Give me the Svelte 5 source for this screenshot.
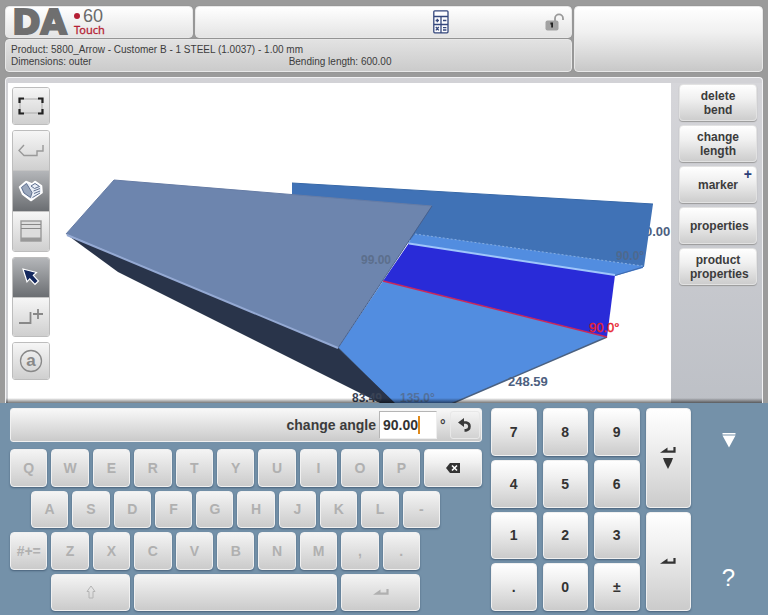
<script>
  const rowOne = ['Q', 'W', 'E', 'R', 'T', 'Y', 'U', 'I', 'O', 'P'];
  const rowTwo = ['A', 'S', 'D', 'F', 'G', 'H', 'J', 'K', 'L', '-'];
  const rowThree = ['#+=', 'Z', 'X', 'C', 'V', 'B', 'N', 'M', ',', '.'];
  const digits = [
    ['7', '8', '9'],
    ['4', '5', '6'],
    ['1', '2', '3'],
    ['.', '0', '±']
  ];
  const actions = ['delete bend', 'change length', 'marker', 'properties', 'product properties'];
  let angle = $state('90.00');
</script>

{#snippet enter()}
  <svg class="enter" width="16" height="6" viewBox="0 0 16 6" aria-hidden="true">
    <path d="M0 5.8 7.500 0.4V3.600H13.4V0H15.6V5.8Z" fill="currentColor" />
  </svg>
{/snippet}

<div class="app">
  <header>
    <div class="panel logo">
      <span class="da">DA</span>
      <span class="model">
        <span class="num"><i></i>60</span>
        <span class="touch">Touch</span>
      </span>
    </div>
    <div class="panel status">
      <button class="bare calc" aria-label="Calculator">
        <svg width="16" height="24" viewBox="0 0 16 24">
          <g fill="none" stroke="#34477c" stroke-width="1.3">
            <rect x="0.8" y="0.8" width="14.2" height="22" rx="1" fill="#fdfdff" />
            <path d="M1 6.5H15M1 14.5H15M8 6.5V23" />
            <path d="M2.6 10.5H6M4.3 8.8V12.2M10 10.5H13.4M2.8 17 5.8 20.4M5.8 17 2.8 20.4M10 17.6H13.4M10 20H13.4" />
          </g>
        </svg>
      </button>
      <button class="bare lock" aria-label="Unlock">
        <svg width="20" height="18" viewBox="0 0 20 18">
          <path d="M10 8V5.4A4 4 0 0 1 18 5.4V7" fill="none" stroke="#9a9a9a" stroke-width="1.8" />
          <rect x="0.5" y="7.5" width="13" height="10" rx="2" fill="#a2a2a2" />
          <path d="M5.4 9.6H8V14.6H6.2V11.4H5.4Z" fill="#222" />
        </svg>
      </button>
    </div>
    <div class="panel info">
      <p>Product: 5800_Arrow - Customer B - 1 STEEL (1.0037) - 1.00 mm</p>
      <p class="split"><span>Dimensions: outer</span><span>Bending length: 600.00</span></p>
    </div>
    <div class="panel extra"></div>
  </header>

  <main>
    <nav class="tools" aria-label="View tools">
      <div class="group">
        <button aria-label="Fit view">
          <svg width="26" height="20" viewBox="0 0 26 20" fill="none">
            <rect x="2" y="3" width="22" height="14" stroke="#aaa" />
            <path d="M1.5 7V2.5H6M20 2.5H24.500V7M24.500 13V17.500H20M6 17.500H1.500V13" stroke="#222" stroke-width="2.2" />
          </svg>
        </button>
      </div>
      <div class="group three">
        <button aria-label="Profile view">
          <svg width="26" height="18" viewBox="0 0 26 18" fill="none" stroke="#999" stroke-width="1.4">
            <path d="M6 3 1 8.500 6 13.500H19V9H25V3" />
          </svg>
        </button>
        <button class="on" aria-label="3D view">
          <svg width="26" height="22" viewBox="0 0 26 22" stroke-linejoin="round">
            <path d="M1.500 7 8 1.500 14 4 17 1.500 23.500 6 24 12.500 13 20.500 4.500 14Z" fill="#e9eef6" stroke="#fff" stroke-width="1.600" />
            <path d="M3.500 7.500 8.500 3.500 14 12.500 12.500 17.500 6 13Z" fill="#9aa7bc" stroke="#5f7090" />
            <path d="M13 6 17 3.500 21.500 6.500 16.500 8.500ZM15.500 11 22 8.500M16 13.500 22 11M14.500 17.500 22 13" fill="none" stroke="#5f7090" />
          </svg>
        </button>
        <button aria-label="List view">
          <svg width="22" height="22" viewBox="0 0 22 22">
            <rect x="1" y="1" width="20" height="20" fill="#ddd" stroke="#999" stroke-width="1.400" />
            <path d="M1 4.500H21M1 8.500H21" stroke="#888" />
            <path d="M1 17.500H21V21H1Z" fill="#999" />
          </svg>
        </button>
      </div>
      <div class="group two">
        <button class="on" aria-label="Select">
          <svg width="18" height="18" viewBox="0 0 18 18">
            <path d="M1 1 14.500 4.500 11.300 7.400 16.500 13 13 16.300 7.700 10.800 5 13.800Z" fill="#14285e" stroke="#fff" stroke-width="1.200" />
          </svg>
        </button>
        <button aria-label="Add bend">
          <svg width="26" height="20" viewBox="0 0 26 20" fill="none" stroke="#888" stroke-width="1.800">
            <path d="M1 16H12.500V5M15 7H25M20 2V12" />
          </svg>
        </button>
      </div>
      <div class="group">
        <button aria-label="Annotations">
          <svg width="24" height="24" viewBox="0 0 24 24">
            <circle cx="12" cy="12" r="10.500" fill="none" stroke="#888" stroke-width="1.300" />
            <text x="12" y="16.500" text-anchor="middle" font-size="17" font-weight="bold" fill="#888">a</text>
          </svg>
        </button>
      </div>
    </nav>

    <svg class="scene" viewBox="50 83 621 320" preserveAspectRatio="xMidYMid slice" role="img" aria-label="Sheet metal part in 3D">
      <text class="dim" x="645" y="236">0.00</text>
      <path d="M292 183 653 204 644 267 410 240 380 210 292 196Z" fill="#4072b6" />
      <path d="M292 183 653 204" stroke="#3768a8" />
      <path d="M408 243 415 234 643 266 643 268 615 276Z" fill="#528de0" />
      <path d="M415 234 643 266" stroke="#86aee2" stroke-dasharray="2 2" />
      <text class="dim ghost" x="616" y="260">90.0°</text>
      <path d="M409 243 615 275 607 337 383 281Z" fill="#292bd8" />
      <path d="M409 243.500 615 275" stroke="#9fc6fb" stroke-width="2" />
      <path d="M615 275.500 643 267" stroke="#3f69ab" />
      <path d="M338 348 383 281 607 337 451 404H394Z" fill="#528de0" />
      <path d="M607 337 451 404M338 348 394 404" stroke="#4b6180" stroke-width="1.500" />
      <path d="M383 281 607 337" stroke="#c8285a" stroke-width="1.400" />
      <path d="M66 234 118 272 382 404H396L338 348Z" fill="#29344a" />
      <path d="M66 234 114 180 432 206 338 348Z" fill="#6d85ae" />
      <path d="M66 234 114 180 432 206" fill="none" stroke="#667ca5" />
      <path d="M432 206 338 348" stroke="#465f8c" />
      <path d="M67 235 338 348" stroke="#94a9d3" stroke-width="2" />
      <text class="dim ghost" x="361" y="264">99.00</text>
      <text class="dim" x="508" y="386">248.59</text>
      <text class="dim dark" x="352" y="402">83.49</text>
      <text class="dim ghost" x="400" y="402">135.0°</text>
      <text class="dim red" x="589" y="332">90.0°</text>
    </svg>

    <aside>
      {#each actions as action}
        <button class:plus={action === 'marker'}>{action}</button>
      {/each}
    </aside>
  </main>

  <section class="keyboard">
    <div class="letters">
      <div class="entry">
        <label for="angle">change angle</label>
        <span class="field"><input id="angle" bind:value={angle} /><i class="caret"></i></span>
        <span class="unit">°</span>
        <button aria-label="Undo">
          <svg width="14" height="14" viewBox="0 0 14 14">
            <path d="M4 4.500H8.200A4 4 0 0 1 8 12.400H6.500" fill="none" stroke="#3a3a3a" stroke-width="2.600" />
            <path d="M0 4.500 6 0V9Z" fill="#3a3a3a" />
          </svg>
        </button>
      </div>
      <div class="row r1">
        {#each rowOne as k}<button class="key">{k}</button>{/each}
        <button class="key strong" aria-label="Backspace">
          <svg width="14" height="10" viewBox="0 0 14 10">
            <path d="M0 5 4 0H14V10H4Z" fill="#333" />
            <path d="M6 2.500 11 7.500M11 2.500 6 7.500" stroke="#fff" stroke-width="1.600" />
          </svg>
        </button>
      </div>
      <div class="row r2">
        {#each rowTwo as k}<button class="key">{k}</button>{/each}
      </div>
      <div class="row r3">
        {#each rowThree as k}<button class="key">{k}</button>{/each}
      </div>
      <div class="row r4">
        <button class="key" aria-label="Shift">
          <svg width="10" height="14" viewBox="0 0 10 14">
            <path d="M5 1 9 6.500H7V13H3V6.500H1Z" fill="none" stroke="#b4b4b4" />
          </svg>
        </button>
        <button class="key" aria-label="Space"></button>
        <button class="key" aria-label="Enter">{@render enter()}</button>
      </div>
    </div>

    <div class="numpad">
      {#each digits as line, r}
        {#each line as d}<button class="key strong">{d}</button>{/each}
        {#if r === 0}
          <button class="key strong tall" aria-label="Enter and next">
            {@render enter()}
            <svg width="10" height="11" viewBox="0 0 10 11"><path d="M0 0H10L8.500 4 5 11 1.500 4Z" fill="#333" /></svg>
          </button>
        {:else if r === 2}
          <button class="key strong tall" aria-label="Confirm">{@render enter()}</button>
        {/if}
      {/each}
    </div>

    <div class="side">
      <button class="bare" aria-label="Hide keyboard">
        <svg width="14" height="16" viewBox="0 0 14 16" fill="#fff">
          <path d="M0.500 1H13.500V2.600H0.500ZM0.500 3.400H13.500L7 15.500Z" />
        </svg>
      </button>
      <button class="bare help">?</button>
    </div>
  </section>
</div>

<style>
  :global(body) { margin: 0; }
  .app, .app * { box-sizing: border-box; }
  .app {
    display: flex;
    flex-direction: column;
    min-height: 100vh;
    background: #9b9b9b;
    font-family: "Liberation Sans", Arial, sans-serif;
    color: #3c3c3c;
  }
  button { font: inherit; color: inherit; padding: 0; margin: 0; cursor: pointer; }
  .bare { background: none; border: 0; display: flex; align-items: center; justify-content: center; }

  header {
    display: grid;
    grid-template-columns: 188fr 378fr 189fr;
    grid-template-rows: 32px 33px;
    gap: 1px 2px;
    padding: 6px 5px 0;
  }
  .panel {
    border: 1px solid #e8e8e8;
    border-radius: 4px;
    background: linear-gradient(#fff, #e4e4e4);
    box-shadow: 0 0 1px #777;
  }
  .info { grid-column: 1 / 3; grid-row: 2; background: linear-gradient(#e2e2e2, #cbcbcb); padding: 4px 5px 0; }
  .info p { margin: 0; font-size: 10px; line-height: 12px; }
  .split { display: flex; }
  .split span { flex: 0 0 50%; }
  .extra { grid-column: 3; grid-row: 1 / 3; background: linear-gradient(#fff, #f0f0f0 40%, #c8c8c8); }
  .logo { display: flex; align-items: center; padding-left: 2px; gap: 3px; }
  .da {
    font: bold 34px/30px "DejaVu Sans", sans-serif;
    color: #6f6f6f;
    -webkit-text-stroke: 2px #6f6f6f;
    width: 63px;
    text-align: center;
  }
  .model { display: flex; flex-direction: column; }
  .num { display: flex; align-items: center; gap: 3px; font-size: 18px; line-height: 14px; color: #6a6a6a; }
  .num i { width: 6px; height: 6px; border-radius: 50%; background: #b51f35; }
  .touch { font: 11px/13px "Noto Sans", sans-serif; color: #b51f35; -webkit-text-stroke: 0.3px #b51f35; }
  .status { display: grid; grid-template-columns: 1fr auto; align-items: center; padding-right: 6px; }
  .calc { justify-self: center; padding-left: 141px; }

  main {
    flex: 1;
    min-height: 320px;
    display: flex;
    margin: 5px 5px 0;
    border: 1px solid #f2f2f4;
    border-bottom: 0;
    border-radius: 4px 4px 0 0;
    background: linear-gradient(#d2d2d6, #cdced2);
    padding: 5px 0 0 2px;
    position: relative;
  }
  main::after {
    content: "";
    position: absolute;
    inset: auto 0 0 0;
    height: 5px;
    background: linear-gradient(#0000, #0008);
  }
  .tools { width: 42px; background: #fff; padding: 4px 0 0 4px; display: flex; flex-direction: column; gap: 5px; }
  .group {
    width: 38px;
    border: 1px solid #bdbdbd;
    border-radius: 3px;
    overflow: hidden;
    display: flex;
    flex-direction: column;
    height: 38px;
    flex-shrink: 0;
  }
  .three { height: 122px; }
  .two { height: 80px; }
  .group button {
    flex: 1;
    border: 0;
    background: linear-gradient(#f6f6f6, #cfcfcf);
    display: flex;
    align-items: center;
    justify-content: center;
  }
  .group button + button { border-top: 1px solid #c4c4c4; }
  .group button.on { background: linear-gradient(#b4b6b9, #6b6e72); }
  .scene { flex: 1; min-width: 0; width: 0; display: block; background: #fff; }
  .dim { font-size: 13px; font-weight: bold; fill: #4d5f80; }
  .ghost { font-size: 12px; fill: #55667f; opacity: 0.7; }
  .dark { font-size: 12px; fill: #3a4355; }
  .red { fill: #e8232f; font-weight: normal; stroke: #e8232f; stroke-width: 0.4px; }
  aside {
    width: 91px;
    flex-shrink: 0;
    padding: 1px 5px 0 8px;
    display: flex;
    flex-direction: column;
    gap: 4px;
    background: linear-gradient(#d6d6da, #bdc0c6);
  }
  aside button {
    height: 37px;
    border: 1px solid #e2e2e2;
    border-radius: 4px;
    background: linear-gradient(#fff, #f0f0f0 40%, #cdcdcd);
    box-shadow: 0 1px 1px #9a9a9a;
    font-size: 12px;
    font-weight: bold;
    line-height: 14px;
    padding: 0 10px;
    position: relative;
  }
  .plus::after {
    content: "+";
    position: absolute;
    top: 0;
    right: 4px;
    color: #2c3f78;
    font-size: 14px;
  }

  .keyboard {
    display: flex;
    height: 212px;
    flex-shrink: 0;
    background: #7491a9;
    padding: 5px 2px 4px 10px;
  }
  .letters { flex: 472; display: flex; flex-direction: column; gap: 4px; margin-right: 9px; }
  .entry {
    height: 34px;
    margin-bottom: 3px;
    display: flex;
    align-items: center;
    justify-content: flex-end;
    border: 1px solid #f0f0f0;
    border-radius: 3px;
    background: linear-gradient(#f8f8f8, #cacaca);
    font-size: 14px;
    font-weight: bold;
    padding-right: 1px;
  }
  .field { position: relative; width: 58px; height: 28px; margin: 0 3px; }
  .field input {
    width: 100%;
    height: 100%;
    border: 1px solid #b5b5b5;
    border-right-color: #eee;
    border-bottom-color: #eee;
    padding: 0 3px;
    background: #fff;
    font: inherit;
    color: #333;
    outline: 0;
  }
  .caret { position: absolute; left: 39px; top: 5px; width: 2px; height: 18px; background: #e08a1a; }
  .unit { width: 10px; }
  .entry button {
    width: 30px;
    height: 28px;
    border: 1px solid #e8e8e8;
    border-radius: 3px;
    background: linear-gradient(#f4f4f4, #d2d2d2);
    display: flex;
    align-items: center;
    justify-content: center;
  }
  .row { flex: 1; display: grid; gap: 4px; }
  .r1 { grid-template-columns: repeat(10, 1fr) 58px; }
  .r2 { grid-template-columns: repeat(10, 1fr); padding: 0 42px 0 21px; }
  .r3 { grid-template-columns: repeat(10, 1fr); padding-right: 62px; }
  .r4 { grid-template-columns: 79fr 203fr 79fr; padding: 0 62px 0 41px; }
  .key {
    display: flex;
    flex-direction: column;
    gap: 5px;
    align-items: center;
    justify-content: center;
    border: 1px solid #f0f0f0;
    border-radius: 4px;
    background: linear-gradient(#f4f4f4, #cbcbcb);
    box-shadow: 0 1px 2px #48617a;
    font-size: 14px;
    font-weight: bold;
    color: #b0b0b0;
    min-width: 0;
  }
  .key.strong { color: #333; background: linear-gradient(#fff, #f0f0f0 35%, #cbcbcb); }
  .numpad {
    flex: 200;
    display: grid;
    grid-template-columns: repeat(4, 1fr);
    grid-template-rows: repeat(4, 1fr);
    gap: 4px 6px;
  }
  .tall { grid-row: span 2; }
  .side {
    flex: 75;
    display: flex;
    flex-direction: column;
    align-items: center;
    justify-content: space-between;
    padding: 24px 0 18px;
  }
  .help { color: #fff; font: 24px/30px "Liberation Sans", Arial, sans-serif; }
</style>
